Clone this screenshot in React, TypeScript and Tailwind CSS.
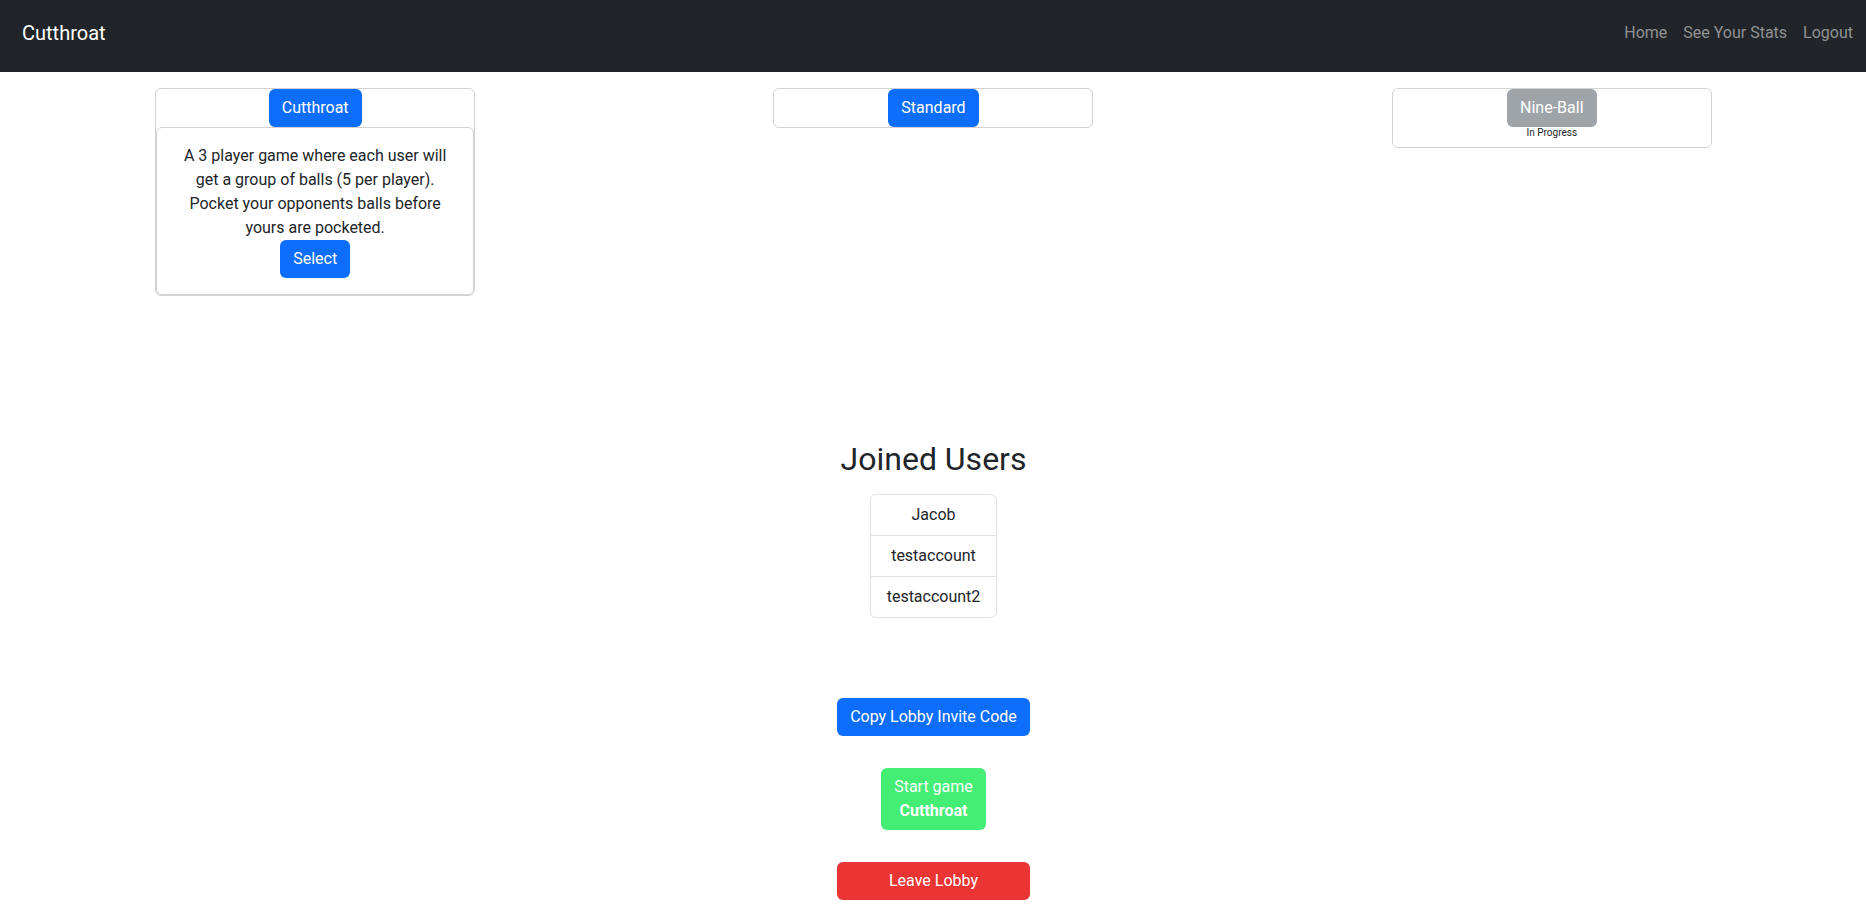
import type { ReactNode } from 'react'

const buttonBase = 'rounded-md px-[13px] py-[7px] text-base leading-6 text-white'

const navLinks = ['Home', 'See Your Stats', 'Logout']
const users = ['Jacob', 'testaccount', 'testaccount2']

function GameCard({ children }: { children: ReactNode }) {
  return (
    <section className="flex w-80 max-w-full flex-col items-center rounded-md border border-[#d2d2d2] bg-white text-center">
      {children}
    </section>
  )
}

export default function App() {
  return (
    <div className="font-['Roboto',sans-serif] text-base text-[#212529]">
      <header className="bg-[#212529]">
        <nav className="flex h-[72px] items-start justify-between pt-3 pr-[13px] pl-[22px]">
          <a href="#" className="py-1.5 text-xl leading-[30px] text-white">
            Cutthroat
          </a>
          <ul className="flex gap-4 py-[9px]">
            {navLinks.map((label) => (
              <li key={label}>
                <a href="#" className="leading-6 text-[#909294]">
                  {label}
                </a>
              </li>
            ))}
          </ul>
        </nav>
      </header>

      <main className="pl-px">
        <div className="grid grid-cols-3 items-start justify-items-center px-[5px] pt-4">
          <GameCard>
            <button type="button" aria-expanded="true" className={`${buttonBase} bg-[#0d6efd]`}>
              Cutthroat
            </button>
            <div className="flex w-full flex-col items-center rounded-md border border-[#d2d2d2] p-4">
              <p className="px-2 leading-6">
                A 3 player game where each user will get a group of balls (5 per player). Pocket your opponents balls
                before yours are pocketed.
              </p>
              <button type="button" className={`${buttonBase} bg-[#0d6efd]`}>
                Select
              </button>
            </div>
          </GameCard>
          <GameCard>
            <button type="button" aria-expanded="false" className={`${buttonBase} bg-[#0d6efd]`}>
              Standard
            </button>
          </GameCard>
          <GameCard>
            <button type="button" disabled className={`${buttonBase} bg-[#9fa4a9]`}>
              Nine-Ball
            </button>
            <p className="pb-2 text-[10px] leading-3">In Progress</p>
          </GameCard>
        </div>

        <div className="mt-36 flex flex-col items-center">
          <h2 className="text-[32px] leading-[38px]">Joined Users</h2>
          <ul className="mt-4 divide-y divide-[#dee2e6] rounded-md border border-[#dee2e6] text-center">
            {users.map((user) => (
              <li key={user} className="px-4 py-2 leading-6">
                {user}
              </li>
            ))}
          </ul>
          <div className="mt-20 flex flex-col items-center gap-8 pb-4">
            <button type="button" className={`${buttonBase} bg-[#0d6efd]`}>
              Copy Lobby Invite Code
            </button>
            <button type="button" className={`${buttonBase} bg-[#44ed74]`}>
              Start game
              <strong className="block font-bold">Cutthroat</strong>
            </button>
            <button type="button" className={`${buttonBase} w-full bg-[#eb3434]`}>
              Leave Lobby
            </button>
          </div>
        </div>
      </main>
    </div>
  )
}
